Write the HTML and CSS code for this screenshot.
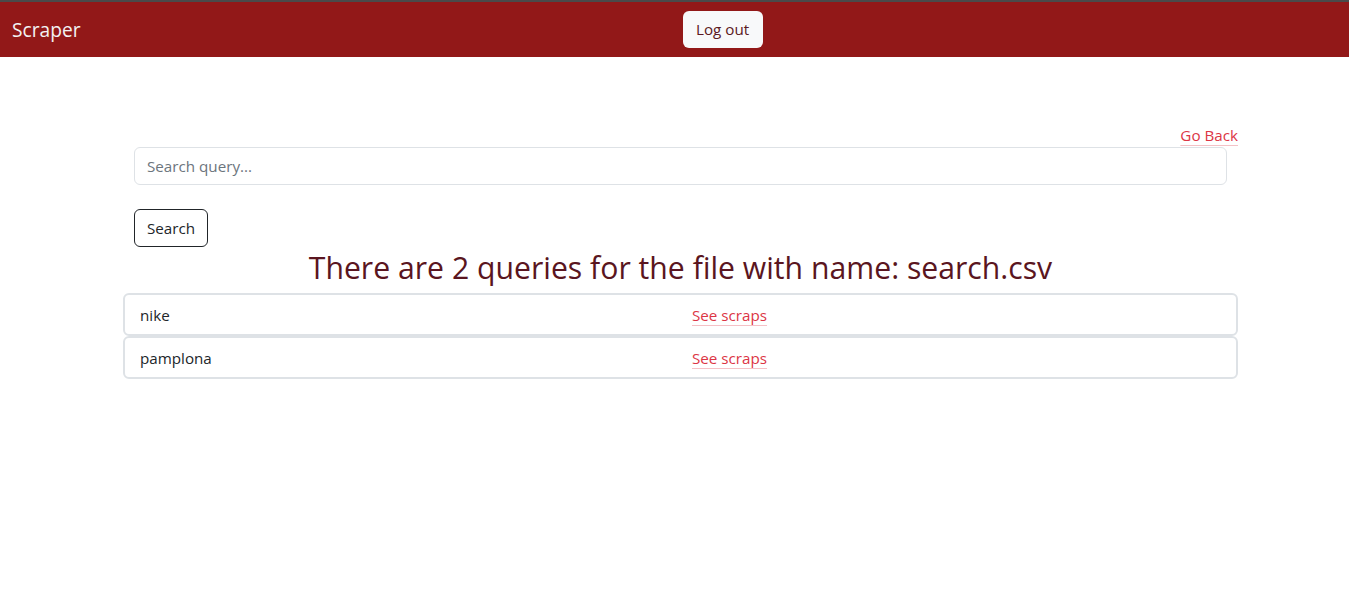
FILE: index.html
```html
<!DOCTYPE html>
<html>
<head>
<meta charset="utf-8">
<link rel="stylesheet" href="styles.css">
</head>
<body>
<nav class="navbar">
  <span class="brand">Scraper</span>
  <button class="logout">Log out</button>
</nav>
<main class="wrap">
  <div class="back-row"><a class="link" href="#">Go Back</a></div>
  <form class="search">
    <input class="query" type="text" placeholder="Search query...">
    <button class="search-btn" type="button">Search</button>
  </form>
  <h2 class="title">There are 2 queries for the file with name: search.csv</h2>
  <ul class="list">
    <li class="item"><span class="name">nike</span><a class="link" href="#">See scraps</a></li>
    <li class="item"><span class="name">pamplona</span><a class="link" href="#">See scraps</a></li>
  </ul>
</main>
</body>
</html>
```
FILE: styles.css
```css
* { box-sizing: border-box; }
body {
  margin: 0;
  font-family: "Open Sans", "Noto Sans", sans-serif;
  font-size: 15.2px;
  color: #212529;
  background: #fff;
}
.navbar {
  height: 57px;
  background: #921818;
  border-top: 2px solid #4a4a4a;
  display: flex;
  align-items: center;
  padding: 0 12px;
}
.brand {
  color: #f2f2f2;
  font-size: 19.2px;
}
.logout {
  margin-left: 602px;
  margin-top: -1px;
  height: 37px;
  width: 80px;
  border: none;
  border-radius: 6px;
  background: #f8f9fa;
  color: #5c1a22;
  font-family: inherit;
  font-size: 15.2px;
}
.wrap {
  width: 1115px;
  margin-left: 123px;
  padding-top: 68px;
}
.back-row {
  display: flex;
  justify-content: flex-end;
  line-height: 20px;
  margin-bottom: 2px;
}
.link {
  color: #dc3545;
  text-decoration: underline;
  text-decoration-color: rgba(220, 53, 69, 0.3);
  text-underline-offset: 4px;
}
.search {
  padding: 0 11px;
  display: flex;
  flex-direction: column;
  align-items: flex-start;
  gap: 24px;
}
.query {
  width: 100%;
  height: 38px;
  border: 1px solid #dee2e6;
  border-radius: 6px;
  padding: 0 12px;
  font-family: inherit;
  font-size: 15.2px;
}
.query::placeholder { color: #6c757d; }
.search-btn {
  height: 38px;
  padding: 0 12px;
  border: 1px solid #212529;
  border-radius: 6px;
  background: #fff;
  color: #212529;
  font-family: inherit;
  font-size: 15.2px;
}
.title {
  margin: 0 0 4px;
  text-align: center;
  font-weight: 400;
  font-size: 30.2px;
  line-height: 42px;
  color: #5a1520;
}
.list {
  list-style: none;
  margin: 0;
  padding: 0;
  display: flex;
  flex-direction: column;
}
.item {
  height: 43px;
  background: #fff;
  border: 2px solid #dee2e6;
  border-radius: 6px;
  display: flex;
  align-items: center;
  padding: 0 15px;
}
.name { width: 552px; }
```
